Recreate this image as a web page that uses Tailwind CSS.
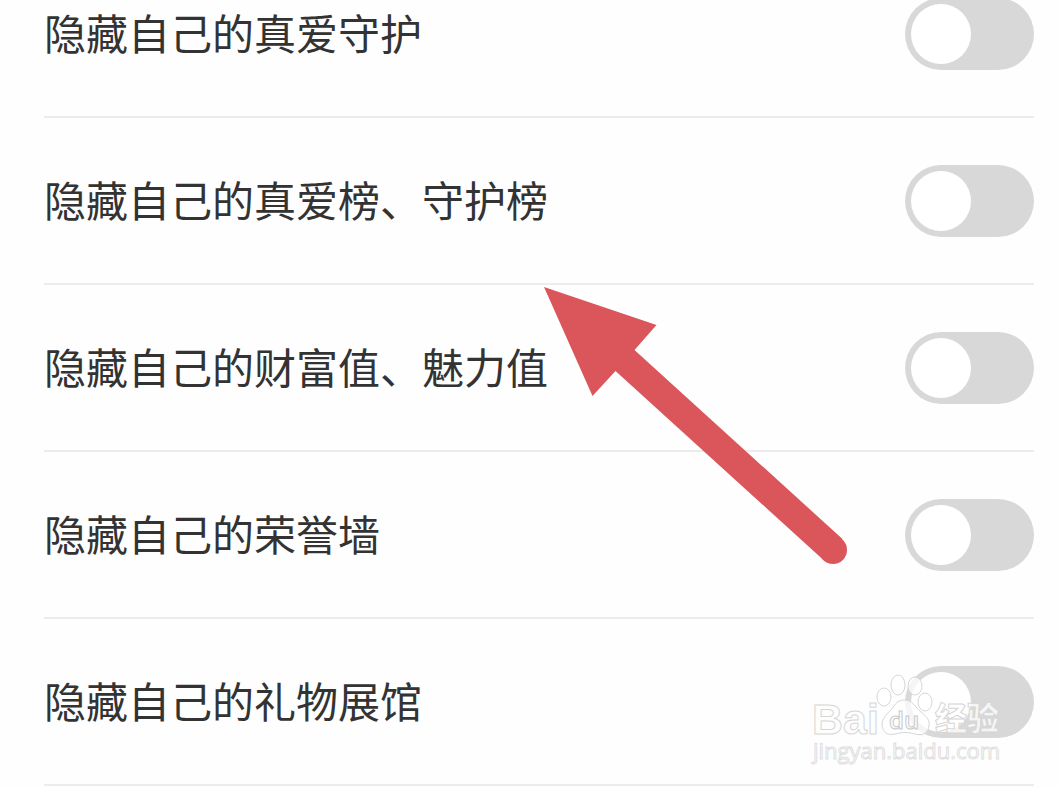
<!DOCTYPE html>
<html lang="zh-CN">
<head>
<meta charset="UTF-8">
<meta name="viewport" content="width=device-width, initial-scale=1">
<title>隐私设置</title>
<script src="https://cdn.jsdelivr.net/npm/@tailwindcss/browser@4"></script>
</head>
<body class="bg-[#fefefe] font-['Noto_Sans_CJK_SC',sans-serif] text-[#333]">
	<main class="relative h-screen overflow-hidden pl-11 pr-[26px]">

		<!-- the list is scrolled, the first row is cut off at the top -->
		<ul class="-mt-[49px]">
			<li class="flex h-[167px] items-center justify-between border-b-2 border-[#ececec]">
				<label for="hide-guard" class="pb-[3px] text-[42px] leading-[60px]">隐藏自己的真爱守护</label>
				<input type="checkbox" role="switch" id="hide-guard"
					class="h-[72px] w-[129px] shrink-0 appearance-none rounded-full bg-[#d8d8d8] p-1.5 before:block before:size-[60px] before:rounded-full before:bg-white checked:bg-green-500 checked:before:ml-auto" />
			</li>
			<li class="flex h-[167px] items-center justify-between border-b-2 border-[#ececec]">
				<label for="hide-rank" class="pb-[3px] text-[42px] leading-[60px]">隐藏自己的真爱榜、守护榜</label>
				<input type="checkbox" role="switch" id="hide-rank"
					class="h-[72px] w-[129px] shrink-0 appearance-none rounded-full bg-[#d8d8d8] p-1.5 before:block before:size-[60px] before:rounded-full before:bg-white checked:bg-green-500 checked:before:ml-auto" />
			</li>
			<li class="flex h-[167px] items-center justify-between border-b-2 border-[#ececec]">
				<label for="hide-wealth" class="pb-[3px] text-[42px] leading-[60px]">隐藏自己的财富值、魅力值</label>
				<input type="checkbox" role="switch" id="hide-wealth"
					class="h-[72px] w-[129px] shrink-0 appearance-none rounded-full bg-[#d8d8d8] p-1.5 before:block before:size-[60px] before:rounded-full before:bg-white checked:bg-green-500 checked:before:ml-auto" />
			</li>
			<li class="flex h-[167px] items-center justify-between border-b-2 border-[#ececec]">
				<label for="hide-honor" class="pb-[3px] text-[42px] leading-[60px]">隐藏自己的荣誉墙</label>
				<input type="checkbox" role="switch" id="hide-honor"
					class="h-[72px] w-[129px] shrink-0 appearance-none rounded-full bg-[#d8d8d8] p-1.5 before:block before:size-[60px] before:rounded-full before:bg-white checked:bg-green-500 checked:before:ml-auto" />
			</li>
			<li class="flex h-[167px] items-center justify-between border-b-2 border-[#ececec]">
				<label for="hide-gifts" class="pb-[3px] text-[42px] leading-[60px]">隐藏自己的礼物展馆</label>
				<input type="checkbox" role="switch" id="hide-gifts"
					class="h-[72px] w-[129px] shrink-0 appearance-none rounded-full bg-[#d8d8d8] p-1.5 before:block before:size-[60px] before:rounded-full before:bg-white checked:bg-green-500 checked:before:ml-auto" />
			</li>
		</ul>

		<!-- arrow -->
		<svg class="pointer-events-none absolute left-[544px] top-[287px]" width="304" height="278" viewBox="0 0 304 278" fill="#db565b" aria-hidden="true">
			<path d="M0 0 112.500 38 90.500 63 298.500 252 279.500 273 71.500 84 48.500 109Z" />
			<circle cx="289" cy="263" r="14" />
		</svg>

		<!-- watermark -->
		<svg class="pointer-events-none absolute right-[50px] top-[670px]" width="200" height="100" viewBox="0 0 200 100" fill="#fff" fill-opacity=".75" stroke="#d6d6d6" stroke-width="1">
			<text x="2" y="64" font-family="Liberation Sans, sans-serif" font-weight="700" font-size="43">Bai</text>
			<ellipse cx="74" cy="27" rx="7" ry="9" />
			<ellipse cx="88" cy="15" rx="7" ry="10" />
			<ellipse cx="105" cy="16" rx="7" ry="9" />
			<ellipse cx="115" cy="32" rx="7" ry="9" />
			<path d="M94 30C103 30 105 37 111 42 117 47 120 50 119 56 118 64 112 66 105 64 98 62 92 62 85 64 77 66 73 62 72 55 72 49 76 45 80 41 84 37 86 30 94 30Z" />
			<text x="79" y="59" stroke="#c8c8c8" font-family="Open Sans, sans-serif" font-weight="600" font-size="24">du</text>
			<text x="125" y="60" font-family="Noto Sans CJK SC, sans-serif" font-weight="900" font-size="32">经验</text>
			<text x="3" y="89" stroke="#dedede" font-family="Open Sans, sans-serif" font-weight="500" font-size="22">jingyan.baidu.com</text>
		</svg>
	</main>
</body>
</html>
